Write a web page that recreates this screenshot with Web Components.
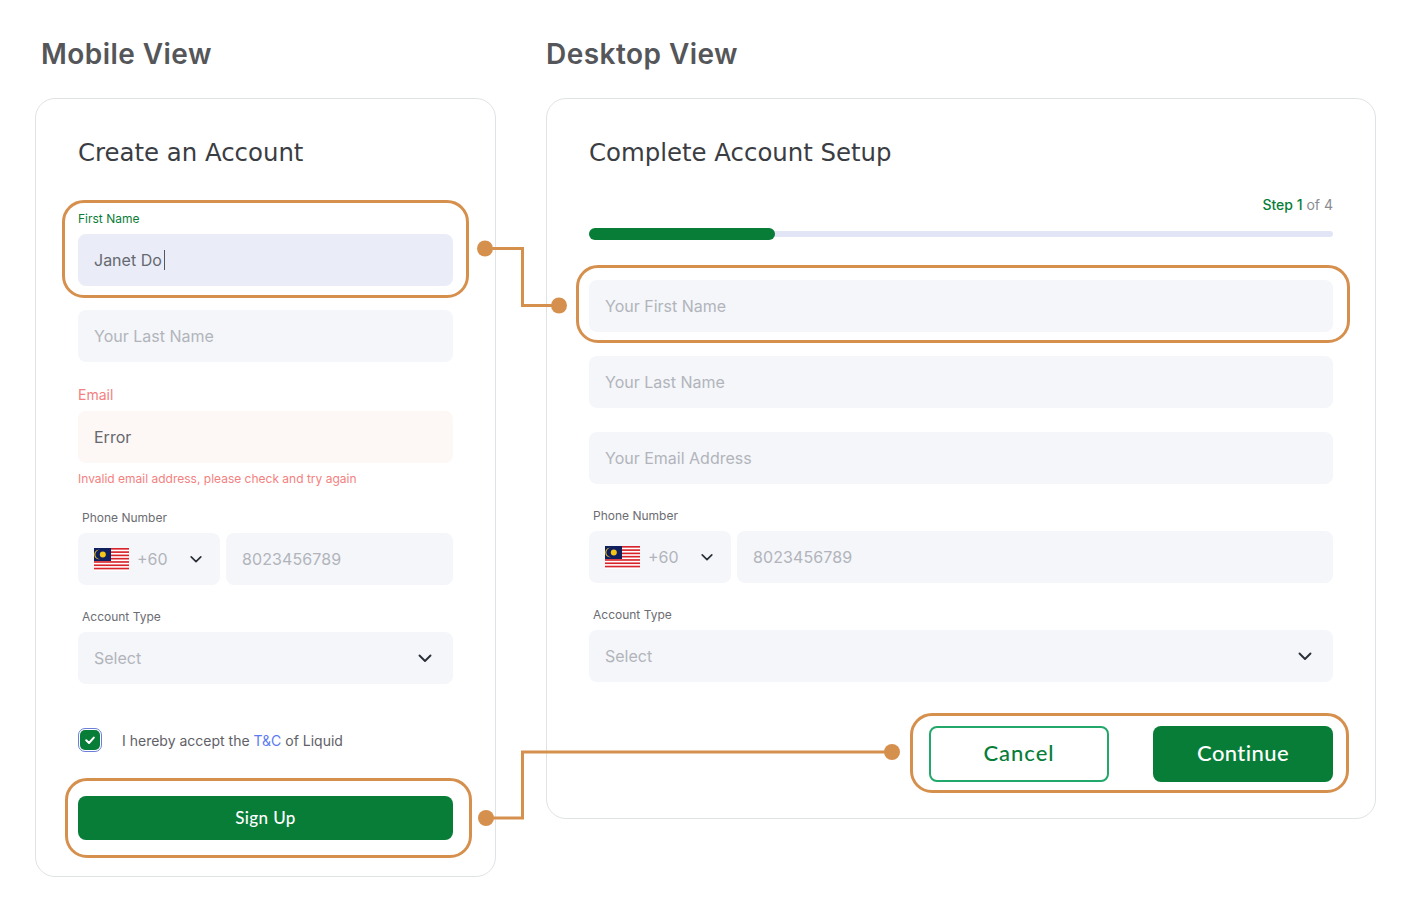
<!DOCTYPE html>
<html>
<head>
<meta charset="utf-8">
<title>Account forms</title>
<style>
html,body{margin:0;padding:0;background:#fff;}
body{font-family:"Inter","Liberation Sans",sans-serif;}
</style>
</head>
<body>
<form-page>
  <view-col slot="mobile" heading="Mobile View" style="--w:461px;--head-left:6px;">
    <form-card heading="Create an Account" style="--h:779px;">
      <mark-box style="--top:-11px;--bottom:-12px;--left:-16px;--right:-16px;margin-top:42px;">
        <form-label color="#0a7d39" style="--mb:7px;">First Name</form-label>
        <text-box tone="active" value="Janet Do" caret></text-box>
      </mark-box>
      <text-box placeholder="Your Last Name" style="margin-top:24px;"></text-box>
      <form-label color="#f47f7f" size="14" style="margin-top:25px;--mb:8px;">Email</form-label>
      <text-box tone="error" value="Error"></text-box>
      <form-label color="#f47f7f" size="12" style="margin-top:8px;">Invalid email address, please check and try again</form-label>
      <form-label indent style="margin-top:23px;--mb:7px;">Phone Number</form-label>
      <phone-box></phone-box>
      <form-label indent style="margin-top:24px;--mb:7px;">Account Type</form-label>
      <select-box></select-box>
      <accept-row style="margin-top:44px;"></accept-row>
      <mark-box style="--top:-18px;--bottom:-18px;--left:-13px;--right:-19px;margin-top:44px;">
        <big-button kind="small">Sign Up</big-button>
      </mark-box>
    </form-card>
  </view-col>
  <view-col slot="desktop" heading="Desktop View" style="--w:830px;--head-left:0px;">
    <form-card heading="Complete Account Setup" style="--h:721px;">
      <step-bar style="margin-top:27px;"></step-bar>
      <mark-box style="--top:-15px;--bottom:-11px;--left:-13px;--right:-17px;margin-top:40px;">
        <text-box placeholder="Your First Name"></text-box>
      </mark-box>
      <text-box placeholder="Your Last Name" style="margin-top:24px;"></text-box>
      <text-box placeholder="Your Email Address" style="margin-top:24px;"></text-box>
      <form-label indent style="margin-top:24px;--mb:7px;">Phone Number</form-label>
      <phone-box></phone-box>
      <form-label indent style="margin-top:24px;--mb:7px;">Account Type</form-label>
      <select-box></select-box>
      <mark-box style="--top:-13px;--bottom:-11px;--left:-19px;--right:-16px;margin-top:44px;margin-left:340px;">
        <button-pair></button-pair>
      </mark-box>
    </form-card>
  </view-col>
  <link-lines slot="lines"></link-lines>
</form-page>

<script>
function makeEl(name, css, html, setup) {
  customElements.define(name, class extends HTMLElement {
    connectedCallback() {
      if (this.shadowRoot) return;
      const root = this.attachShadow({ mode: "open" });
      root.innerHTML = "<style>" + css + "</style>" + (typeof html == "function" ? html(this) : html);
      if (setup) setup(this, root);
    }
  });
}

const chevron = (w) => `<svg width="${w}" height="${w}" viewBox="0 0 16 16" fill="none"><path d="M2.5 5.5 8 11l5.5-5.5" stroke="#2b2f38" stroke-width="1.9" stroke-linecap="round" stroke-linejoin="round"/></svg>`;

function flagSvg() {
  let stripes = "";
  for (let i = 0; i < 7; i++) {
    stripes += `<rect x="0" y="${i * 3.286}" width="35" height="1.643" fill="#d8232a"/>`;
  }
  return `<svg width="35" height="23" viewBox="0 0 35 23">
    <rect width="35" height="23" fill="#fff"/>${stripes}
    <rect width="17" height="13" fill="#10205f"/>
    <path d="M6 1.8a4.8 4.8 0 1 0 0 9.4 3.9 3.9 0 1 1 0-9.4z" fill="#f5c518"/>
    <circle cx="8.8" cy="6.5" r="3" fill="#f5c518"/>
  </svg>`;
}

makeEl("form-page", `
  :host{display:block;width:1411px;height:907px;position:relative;box-sizing:border-box;padding:0 35px;}
  .cols{display:flex;gap:50px;align-items:flex-start;}
`, `<div class="cols"><slot name="mobile"></slot><slot name="desktop"></slot></div><slot name="lines"></slot>`);

makeEl("view-col", `
  :host{display:block;width:var(--w);}
  h2{margin:0;height:98px;box-sizing:border-box;padding:37px 0 0 var(--head-left);font:600 28px/34px "Inter","Liberation Sans",sans-serif;color:#555659;letter-spacing:.45px;}
`, (el) => `<h2>${el.getAttribute("heading")}</h2><slot></slot>`);

makeEl("form-card", `
  :host{display:block;height:var(--h);box-sizing:border-box;border:1px solid #dfe3e4;border-radius:20px;padding:38px 42px 0 42px;background:#fff;}
  h3{margin:0;font:400 24.4px/32px "DejaVu Sans","Open Sans",sans-serif;color:#3a3d42;}
  .body{display:flex;flex-direction:column;}
`, (el) => `<h3>${el.getAttribute("heading")}</h3><div class="body"><slot></slot></div>`);

makeEl("mark-box", `
  :host{display:block;position:relative;}
  .ring{position:absolute;top:var(--top);bottom:var(--bottom);left:var(--left);right:var(--right);border:3px solid #d6904e;border-radius:22px;pointer-events:none;}
`, `<div class="ring"></div><slot></slot>`);

makeEl("form-label", `
  :host{display:block;font:400 12px/16px "Inter","Liberation Sans",sans-serif;color:var(--c,#6b6d72);margin-bottom:var(--mb,0);}
  :host([indent]){padding-left:4px;}
  :host([size="14"]){font-size:14px;line-height:16px;}
`, `<slot></slot>`, (el) => {
  const c = el.getAttribute("color");
  if (c) el.style.setProperty("--c", c);
});

makeEl("text-box", `
  :host{display:flex;align-items:center;height:52px;box-sizing:border-box;padding:0 16px;border-radius:8px;background:#f4f6fa;font:400 16px/20px "Inter","Liberation Sans",sans-serif;color:#b2b4ba;}
  :host([tone="active"]){background:#eaedf8;color:#66686f;}
  :host([tone="error"]){background:#fdf7f5;color:#66686f;}
  i{display:inline-block;width:1px;height:20px;background:#55575d;margin-left:2px;}
`, (el) => {
  const txt = el.getAttribute("value") || el.getAttribute("placeholder") || "";
  return `<span>${txt}</span>${el.hasAttribute("caret") ? "<i></i>" : ""}`;
});

makeEl("phone-box", `
  :host{display:flex;gap:6px;}
  .code{flex:0 0 142px;box-sizing:border-box;height:52px;display:flex;align-items:center;padding:0 17px 0 16px;border-radius:8px;background:#f4f6fa;font:400 16px/20px "Inter","Liberation Sans",sans-serif;color:#b2b4ba;}
  .code svg:first-child{margin-right:8px;}
  .code b{font-weight:400;flex:1;}
  .num{flex:1;box-sizing:border-box;height:52px;display:flex;align-items:center;padding:0 16px;border-radius:8px;background:#f4f6fa;font:400 16px/20px "Inter","Liberation Sans",sans-serif;color:#b2b4ba;letter-spacing:.1px;}
`, `<div class="code">${flagSvg()}<b>+60</b>${chevron(14)}</div><div class="num">8023456789</div>`);

makeEl("select-box", `
  :host{display:flex;align-items:center;justify-content:space-between;height:52px;box-sizing:border-box;padding:0 20px 0 16px;border-radius:8px;background:#f4f6fa;font:400 16px/20px "Inter","Liberation Sans",sans-serif;color:#b2b4ba;}
`, `<span>Select</span>${chevron(16)}`);

makeEl("accept-row", `
  :host{display:flex;align-items:center;height:24px;font:400 14px/20px "Inter","Liberation Sans",sans-serif;color:#5f6167;}
  .box{width:24px;height:24px;box-sizing:border-box;border:1px solid #6c7fd8;border-radius:7px;padding:1px;margin:0 20px 0 0;}
  .fill{width:20px;height:20px;border-radius:5px;background:#087d38;display:flex;align-items:center;justify-content:center;}
  span{padding-top:1px;}
  a{color:#5b7bf0;text-decoration:none;}
`, `<div class="box"><div class="fill"><svg width="12" height="12" viewBox="0 0 12 12" fill="none"><path d="M2.2 6.3 5 9l4.8-5.4" stroke="#fff" stroke-width="2" stroke-linecap="round" stroke-linejoin="round"/></svg></div></div><span>I hereby accept the <a>T&amp;C</a> of Liquid</span>`);

makeEl("big-button", `
  :host{display:flex;align-items:center;justify-content:center;box-sizing:border-box;height:56px;width:180px;padding-bottom:2px;border-radius:8px;background:#087d38;color:#fff;font:500 22px/28px "Lato","Open Sans",sans-serif;letter-spacing:.4px;}
  :host([kind="small"]){width:auto;height:44px;padding-bottom:0;font-size:17px;font-weight:500;}
  :host([kind="ghost"]){background:#fff;border:2px solid #22a86b;color:#087d38;letter-spacing:1px;}
`, `<slot></slot>`);

makeEl("button-pair", `
  :host{display:flex;justify-content:flex-end;gap:44px;}
`, `<big-button kind="ghost">Cancel</big-button><big-button>Continue</big-button>`);

makeEl("step-bar", `
  :host{display:block;}
  .txt{text-align:right;font:400 14px/18px "Inter","Liberation Sans",sans-serif;color:#8a8c92;}
  .txt b{font-weight:500;color:#087d38;}
  .track{margin-top:14px;height:12px;display:flex;align-items:center;position:relative;}
  .rail{flex:1;height:6px;background:#e1e5f6;border-radius:3px;}
  .fill{position:absolute;left:0;top:0;height:12px;width:25%;background:#087d38;border-radius:6px;}
`, `<div class="txt"><b>Step 1</b> of 4</div><div class="track"><div class="rail"></div><div class="fill"></div></div>`);

makeEl("link-lines", `
  :host{position:absolute;left:0;top:0;width:1411px;height:907px;pointer-events:none;display:block;}
  svg{display:block;}
`, `<svg width="1411" height="907" viewBox="0 0 1411 907" fill="none">
  <path d="M485 248.5H522.5V305.5H559" stroke="#d6904e" stroke-width="3"/>
  <circle cx="485" cy="248.5" r="8" fill="#d6904e"/>
  <circle cx="559" cy="305.5" r="8" fill="#d6904e"/>
  <path d="M486 818H522.5V752H892" stroke="#d6904e" stroke-width="3"/>
  <circle cx="486" cy="818" r="8" fill="#d6904e"/>
  <circle cx="892" cy="752" r="8" fill="#d6904e"/>
</svg>`);
</script>
</body>
</html>
